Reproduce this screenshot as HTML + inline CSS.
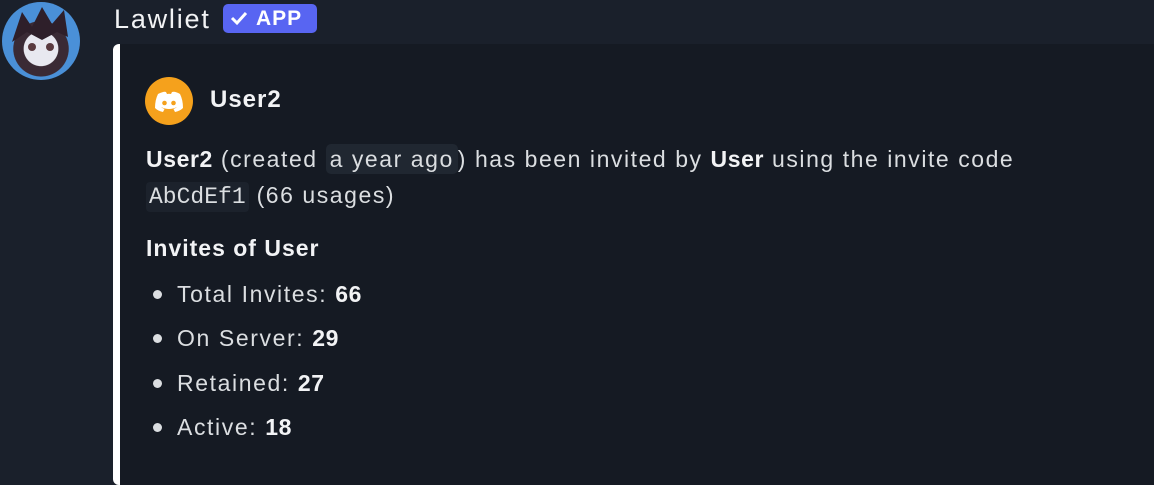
<!DOCTYPE html>
<html><head><meta charset="utf-8"><style>
body{margin:0;width:1154px;height:485px;background:#1a202b;overflow:hidden;font-family:"Liberation Sans",sans-serif;color:#dbdee1;position:relative}
.av{position:absolute;left:2px;top:2px;width:78px;height:78px;border-radius:50%;background:radial-gradient(circle at 50% 60%,#e8e8f0 0 28%,#3a2a35 29% 45%,#4a90d8 46%);overflow:hidden}
.name{position:absolute;left:114px;top:2px;font-size:27px;color:#f2f3f5;line-height:34px;letter-spacing:1.8px}
.badge{position:absolute;left:223px;top:4px;width:94px;height:29px;background:#5865f2;border-radius:5px;color:#fff;font-weight:bold;font-size:21px;line-height:29px}
.embed{position:absolute;left:113px;top:44px;width:1041px;height:441px;background:#151a23;border-radius:6px 0 0 6px}
.bar{position:absolute;left:113px;top:44px;width:7px;height:441px;background:#fff;border-radius:6px 0 0 6px}
.ic{position:absolute;left:145px;top:77px;width:48px;height:48px;border-radius:50%;background:#f5a11c}
.au{position:absolute;left:210px;top:86px;font-size:24px;font-weight:bold;color:#f2f3f5;letter-spacing:1px}
.t{position:absolute;left:146px;font-size:23px;color:#dbdee1;white-space:nowrap;letter-spacing:1.55px}
b{color:#f2f3f5;letter-spacing:0.6px}
.hl{background:#202731;border-radius:5px;padding:2px 4px}
code{font-family:"Liberation Mono",monospace;font-size:23px;letter-spacing:0;background:#1c222c;border-radius:4px;padding:2px 3px}
.li{position:absolute;left:177px;font-size:23px;white-space:nowrap;letter-spacing:1.6px}
.dot{position:absolute;left:153px;width:9px;height:9px;border-radius:50%;background:#dbdee1}
</style></head><body>
<div class="av"><svg width="78" height="78"><path d="M10 40 L20 10 L30 25 L40 5 L50 22 L62 8 L66 35 L55 30 L40 38 L25 30 Z" fill="#2e1f2a"/><circle cx="30" cy="45" r="4" fill="#5a3a40"/><circle cx="48" cy="45" r="4" fill="#5a3a40"/></svg></div>
<div class="name">Lawliet</div>
<div class="badge"><svg style="position:absolute;left:7px;top:7px" width="18" height="15"><path d="M2 7 L7 12 L16 2" stroke="#fff" stroke-width="3" fill="none"/></svg><span style="position:absolute;left:33px;letter-spacing:1px">APP</span></div>
<div class="embed"></div><div class="bar"></div>
<div class="ic"><svg width="48" height="48"><path d="M13 17 Q19 14 21 15 L22 17 Q24 16.5 26 17 L27 15 Q30 14 35 17 Q38 23 38 31 Q35 34 30 35 L28.5 32 Q31 31 32 30 Q24 34 16 30 Q17 31 19.5 32 L18 35 Q13 34 10 31 Q10 23 13 17Z" fill="#fff"/><circle cx="19.5" cy="26" r="2.3" fill="#f5a11c"/><circle cx="28.5" cy="26" r="2.3" fill="#f5a11c"/></svg></div>
<div class="au">User2</div>
<div class="t" style="top:146px"><b>User2</b> (created <span class="hl">a year ago</span>) has been invited by <b>User</b> using the invite code</div>
<div class="t" style="top:182px"><code>AbCdEf1</code> (66 usages)</div>
<div class="t" style="top:235px;font-weight:bold;color:#f2f3f5;letter-spacing:1px">Invites of User</div>
<div class="dot" style="top:290px"></div><div class="li" style="top:281px">Total Invites: <b>66</b></div>
<div class="dot" style="top:334px"></div><div class="li" style="top:325px">On Server: <b>29</b></div>
<div class="dot" style="top:379px"></div><div class="li" style="top:370px">Retained: <b>27</b></div>
<div class="dot" style="top:423px"></div><div class="li" style="top:414px">Active: <b>18</b></div>
</body></html>
